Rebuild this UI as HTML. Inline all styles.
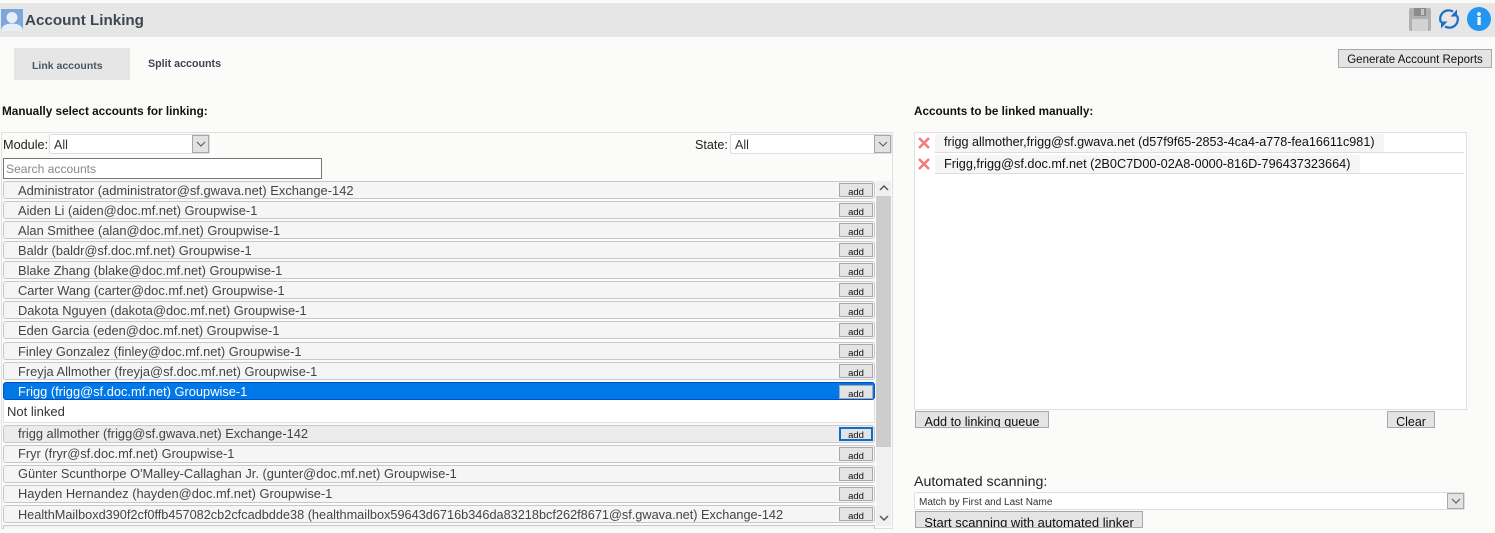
<!DOCTYPE html>
<html><head><meta charset="utf-8">
<style>
html,body{margin:0;padding:0}
body{width:1495px;height:533px;position:relative;overflow:hidden;background:#fbfbf9;font-family:"Liberation Sans",Arial,sans-serif;color:#222}
div,span{position:absolute;box-sizing:border-box;white-space:nowrap}
.r{left:3px;width:872px;height:18px;background:#f5f5f5;border:1px solid #c8c8c8;border-radius:3px;font-size:12.85px;line-height:17px;padding-left:14px;color:#444}
.u{line-height:15px}
.a{left:839px;width:34px;height:14px;margin-top:-1px;background:#e4e4e4;border:1px solid #a8a8a8;font-size:9.5px;line-height:17px;text-align:center;color:#111;overflow:hidden}
.b{background:#e4e4e4;border:1px solid #a8a8a8;color:#111;text-align:center}
.sel{background:#fff;border:1px solid #ddd;border-radius:2px;color:#333}
.ar{background:#e2e2e2;border:1px solid #a8a8a8}
</style></head><body>
<div style="left:0;top:3px;width:1495px;height:34px;background:#e6e6e6"></div>
<svg style="position:absolute;left:1px;top:9px" width="22" height="22" viewBox="0 0 22 22"><rect width="22" height="22" fill="#7ba7dc"/><circle cx="11" cy="8.500" r="5.500" fill="#e8eef5"/><path d="M0 22c0-5 5-7.500 11-7.500s11 2.500 11 7.500z" fill="#e8eef5"/></svg>
<div style="left:25px;top:12px;font-size:15.2px;font-weight:bold;line-height:18px;color:#3d4652">Account Linking</div>
<svg style="position:absolute;left:1409px;top:8px" width="22" height="23" viewBox="0 0 22 23"><rect width="22" height="23" rx="2" fill="#b0b0b0"/><rect x="5" y="0" width="12" height="8" fill="#8c8c8c"/><rect x="12" y="1" width="3" height="6" fill="#c4c4c4"/><rect x="3" y="11" width="16" height="12" fill="#d2d2d2"/></svg>
<svg style="position:absolute;left:1438px;top:8px" width="22" height="22" viewBox="0 0 22 22" fill="none" stroke="#1c6ec4" stroke-width="2.2"><path d="M3 14.500A8.500 8.500 0 0 1 15 3.500"/><path d="M19 7.500A8.500 8.500 0 0 1 7 18.500"/><path d="M19 1.500V8.500H12.500z" fill="#1c6ec4" stroke="none"/><path d="M3 20.500V13.500H9.500z" fill="#1c6ec4" stroke="none"/></svg>
<svg style="position:absolute;left:1467px;top:7px" width="24" height="24" viewBox="0 0 24 24"><circle cx="12" cy="12" r="12" fill="#2196f3"/><rect x="10.500" y="10" width="3.200" height="8" fill="#fff"/><circle cx="12" cy="7" r="1.900" fill="#fff"/></svg>

<div style="left:14px;top:48px;width:116px;height:32px;background:#e6e6e6"></div>
<div style="left:32px;top:59px;font-size:10.5px;font-weight:bold;line-height:14px;color:#4a5560">Link accounts</div>
<div style="left:148px;top:57px;font-size:10.7px;font-weight:bold;line-height:14px;color:#3d4652">Split accounts</div>
<div class="b" style="left:1338px;top:49px;width:154px;height:19px;font-size:11.500px;line-height:20px;overflow:hidden">Generate Account Reports</div>

<div style="left:2px;top:105px;font-size:11.75px;font-weight:bold;line-height:14px;color:#111">Manually select accounts for linking:</div>
<div style="left:914px;top:105px;font-size:11.7px;font-weight:bold;line-height:14px;color:#111">Accounts to be linked manually:</div>

<div style="left:1px;top:132px;width:892px;height:397px;border:1px solid #e0e0e0;background:#fbfbf9"></div>
<div style="left:3px;top:137px;font-size:12.7px;line-height:16px;color:#222">Module:</div>
<div class="sel" style="left:49px;top:134px;width:161px;height:20px;font-size:12.500px;line-height:20px;padding-left:4px">All</div>
<div class="ar" style="left:192px;top:135px;width:17px;height:18px"><svg style="position:absolute;left:3px;top:5px" width="10" height="7"><path d="M1 1l4 4 4-4" fill="none" stroke="#555"/></svg></div>
<div style="left:695px;top:137px;font-size:12.6px;line-height:16px;color:#222">State:</div>
<div class="sel" style="left:730px;top:134px;width:162px;height:20px;font-size:12.500px;line-height:20px;padding-left:4px">All</div>
<div class="ar" style="left:874px;top:135px;width:17px;height:18px"><svg style="position:absolute;left:3px;top:5px" width="10" height="7"><path d="M1 1l4 4 4-4" fill="none" stroke="#555"/></svg></div>
<div style="left:3px;top:158px;width:319px;height:21px;background:#fff;border:1px solid #777;font-size:12.1px;line-height:20px;padding-left:2px;color:#888">Search accounts</div>

<div style="left:876px;top:181px;width:15px;height:345px;background:#f0f0f0"></div>
<div style="left:876px;top:196px;width:15px;height:251px;background:#cdcdcd"></div>
<svg style="position:absolute;left:879px;top:185px" width="10" height="7"><path d="M1 5l4-4 4 4" fill="none" stroke="#555" stroke-width="1.500"/></svg>
<svg style="position:absolute;left:879px;top:515px" width="10" height="7"><path d="M1 1l4 4 4-4" fill="none" stroke="#555" stroke-width="1.500"/></svg>

<div class="r" style="top:181px;font-size:12.93px">Administrator (administrator@sf.gwava.net) Exchange-142</div><div class="a" style="top:184px">add</div>
<div class="r" style="top:201px">Aiden Li (aiden@doc.mf.net) Groupwise-1</div><div class="a" style="top:204px">add</div>
<div class="r" style="top:221px">Alan Smithee (alan@doc.mf.net) Groupwise-1</div><div class="a" style="top:224px">add</div>
<div class="r" style="top:241px">Baldr (baldr@sf.doc.mf.net) Groupwise-1</div><div class="a" style="top:244px">add</div>
<div class="r" style="top:261px">Blake Zhang (blake@doc.mf.net) Groupwise-1</div><div class="a" style="top:264px">add</div>
<div class="r" style="top:281px">Carter Wang (carter@doc.mf.net) Groupwise-1</div><div class="a" style="top:284px">add</div>
<div class="r" style="top:301px">Dakota Nguyen (dakota@doc.mf.net) Groupwise-1</div><div class="a" style="top:304px">add</div>
<div class="r" style="top:321px">Eden Garcia (eden@doc.mf.net) Groupwise-1</div><div class="a" style="top:324px">add</div>
<div class="r" style="top:342px">Finley Gonzalez (finley@doc.mf.net) Groupwise-1</div><div class="a" style="top:345px">add</div>
<div class="r" style="top:362px">Freyja Allmother (freyja@sf.doc.mf.net) Groupwise-1</div><div class="a" style="top:365px">add</div>
<div style="left:3px;top:400px;width:872px;height:23px;background:#fff;border:1px solid #e0e0e0;border-top:0;font-size:13px;line-height:23px;padding-left:3px;color:#333">Not linked</div>
<div class="r" style="top:382px;background:#0078e7;border-color:#0050c8;color:#fff">Frigg (frigg@sf.doc.mf.net) Groupwise-1</div><div class="a" style="top:386px">add</div>
<div class="r u" style="top:425px;background:#ececec">frigg allmother (frigg@sf.gwava.net) Exchange-142</div><div class="a" style="top:428px;height:14px;border:2px solid #0a6fc8;line-height:13px">add</div>
<div class="r u" style="top:445px">Fryr (fryr@sf.doc.mf.net) Groupwise-1</div><div class="a" style="top:448px">add</div>
<div class="r u" style="top:465px">Günter Scunthorpe O'Malley-Callaghan Jr. (gunter@doc.mf.net) Groupwise-1</div><div class="a" style="top:468px">add</div>
<div class="r u" style="top:485px">Hayden Hernandez (hayden@doc.mf.net) Groupwise-1</div><div class="a" style="top:488px">add</div>
<div class="r" style="top:505px;font-size:12.73px">HealthMailboxd390f2cf0ffb457082cb2cfcadbdde38 (healthmailbox59643d6716b346da83218bcf262f8671@sf.gwava.net) Exchange-142</div><div class="a" style="top:508px">add</div>
<div style="left:3px;top:525px;width:872px;height:4px;background:#f5f5f5;border:1px solid #c8c8c8;border-bottom:0"></div>

<div style="left:914px;top:132px;width:553px;height:278px;background:#fff;border:1px solid #e0e0e0"></div>
<svg style="position:absolute;left:917px;top:136px" width="14" height="14"><path d="M2 2l10 10M12 2L2 12" stroke="#f47c7c" stroke-width="2.600"/></svg>
<svg style="position:absolute;left:917px;top:157px" width="14" height="14"><path d="M2 2l10 10M12 2L2 12" stroke="#f47c7c" stroke-width="2.600"/></svg>
<div style="left:935px;top:152px;width:529px;height:1px;background:#ddd"></div>
<div style="left:935px;top:173px;width:529px;height:1px;background:#ddd"></div>
<div style="left:935px;top:134px;width:449px;height:18px;background:#f5f5f5;font-size:12.6px;line-height:17px;padding-left:9px;color:#111">frigg allmother,frigg@sf.gwava.net (d57f9f65-2853-4ca4-a778-fea16611c981)</div>
<div style="left:935px;top:155px;width:425px;height:18px;background:#f5f5f5;font-size:12.7px;line-height:18px;padding-left:9px;color:#111">Frigg,frigg@sf.doc.mf.net (2B0C7D00-02A8-0000-816D-796437323664)</div>

<div class="b" style="left:915px;top:411px;width:134px;height:17px;font-size:12.7px;line-height:20px;overflow:hidden">Add to linking queue</div>
<div class="b" style="left:1387px;top:411px;width:48px;height:17px;font-size:12.500px;line-height:20px;overflow:hidden">Clear</div>

<div style="left:914px;top:474px;font-size:14.2px;line-height:16px;color:#222">Automated scanning:</div>
<div class="sel" style="left:914px;top:492px;width:551px;height:18px;font-size:10px;line-height:20px;padding-left:4px">Match by First and Last Name</div>
<div class="ar" style="left:1447px;top:493px;width:17px;height:16px"><svg style="position:absolute;left:3px;top:4px" width="10" height="7"><path d="M1 1l4 4 4-4" fill="none" stroke="#555"/></svg></div>
<div class="b" style="left:915px;top:511px;width:228px;height:17px;font-size:13px;line-height:21px;overflow:hidden">Start scanning with automated linker</div>
</body></html>
